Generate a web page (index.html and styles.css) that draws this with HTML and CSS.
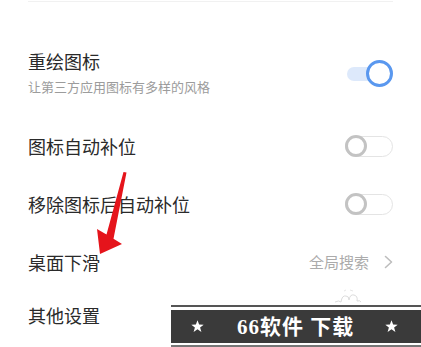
FILE: index.html
```html
<!DOCTYPE html>
<html lang="zh-CN">
<head>
<meta charset="utf-8">
<title>桌面设置</title>
<link rel="stylesheet" href="styles.css">
</head>
<body>
<div class="page">
  <div class="divider"></div>

  <div class="row row-first">
    <div class="text">
      <div class="title">重绘图标</div>
      <div class="sub">让第三方应用图标有多样的风格</div>
    </div>
    <span class="switch on"><span class="track"></span><span class="knob"></span></span>
  </div>

  <div class="row row-std">
    <div class="title">图标自动补位</div>
    <span class="switch off"><span class="track"></span><span class="knob"></span></span>
  </div>

  <div class="row row-std">
    <div class="title">移除图标后自动补位</div>
    <span class="switch off"><span class="track"></span><span class="knob"></span></span>
  </div>

  <div class="row row-tall">
    <div class="title">桌面下滑</div>
    <div class="value">
      <span class="value-text">全局搜索</span>
      <svg class="chevron" width="9" height="14" viewBox="0 0 9 14"><path d="M1.5 1.5 L7.5 7 L1.5 12.5" fill="none" stroke="#bdbdbd" stroke-width="1.6" stroke-linecap="round" stroke-linejoin="round"/></svg>
    </div>
  </div>

  <div class="row row-last">
    <div class="title">其他设置</div>
  </div>
</div>

<svg class="arrow" width="421" height="347" viewBox="0 0 421 347">
  <polygon points="123.5,172 126.5,172.5 113.5,238.8 122,244 100,254 97,229 106.5,234.6" fill="#e5141b"/>
</svg>

<svg class="doodle" width="30" height="18" viewBox="0 0 30 18">
  <path d="M2 15 Q6 13 8 15 M8 15 Q9 8 13 9 Q16 9 16 13 Q17 7 21 8 Q25 9 24 14 Q27 13 28 15" fill="none" stroke="#dcdcdc" stroke-width="1"/>
  <path d="M11 4 L13 3 M17 3 L20 4" fill="none" stroke="#e6e6e6" stroke-width="1"/>
</svg>

<div class="banner">
  <div class="banner-line-top"></div>
  <div class="banner-band">
    <svg class="star" width="13" height="13" viewBox="0 0 12 12"><polygon points="6,0.3 7.5,4.2 11.7,4.3 8.4,6.9 9.6,11 6,8.6 2.4,11 3.6,6.9 0.3,4.3 4.5,4.2" fill="#ffffff"/></svg>
    <span class="banner-text">66软件 下载</span>
    <svg class="star star-right" width="13" height="13" viewBox="0 0 12 12"><polygon points="6,0.3 7.5,4.2 11.7,4.3 8.4,6.9 9.6,11 6,8.6 2.4,11 3.6,6.9 0.3,4.3 4.5,4.2" fill="#ffffff"/></svg>
  </div>
  <div class="banner-line-bottom"></div>
</div>
</body>
</html>
```

FILE: styles.css
```css
html, body {
  margin: 0;
  padding: 0;
  background: #ffffff;
}

body {
  width: 421px;
  height: 347px;
  overflow: hidden;
  position: relative;
  font-family: "Noto Sans CJK SC", "Noto Sans", sans-serif;
}

.page {
  display: flex;
  flex-direction: column;
  padding: 0 28px;
}

.divider {
  margin-top: 1px;
  height: 1px;
  background: #f1f1f1;
}

.row {
  display: flex;
  align-items: center;
  justify-content: space-between;
}

.row-first {
  height: 115px;
  align-items: flex-start;
  padding-top: 47px;
  box-sizing: border-box;
}

.row-std {
  height: 58px;
}

.row-tall {
  height: 58px;
}

.row-last {
  height: 47px;
}

.text {
  display: flex;
  flex-direction: column;
}

.title {
  font-size: 18px;
  line-height: 24px;
  color: #2a2a2a;
}

.sub {
  margin-top: 5px;
  font-size: 13px;
  line-height: 18px;
  color: #9c9c9c;
}

.switch {
  position: relative;
  display: block;
  flex: none;
}

.switch.on {
  width: 46px;
  height: 27px;
  margin-top: 11px;
}

.switch.on .track {
  position: absolute;
  left: 0;
  top: 7px;
  width: 40px;
  height: 14px;
  border-radius: 7px;
  background: #dde9fb;
}

.switch.on .knob {
  position: absolute;
  right: 0;
  top: 0;
  width: 27px;
  height: 27px;
  box-sizing: border-box;
  border-radius: 50%;
  border: 3.5px solid #5a98ef;
  background: #ffffff;
}

.switch.off {
  width: 48px;
  height: 22px;
}

.switch.off .track {
  position: absolute;
  left: 0;
  top: 0.5px;
  width: 48px;
  height: 21px;
  box-sizing: border-box;
  border-radius: 11px;
  border: 1.5px solid #e4e4e4;
  background: #ffffff;
}

.switch.off .knob {
  position: absolute;
  left: 0;
  top: 0;
  width: 22px;
  height: 22px;
  box-sizing: border-box;
  border-radius: 50%;
  border: 3px solid #c3c3c3;
  background: #ffffff;
}

.value {
  display: flex;
  align-items: center;
}

.value-text {
  font-size: 15px;
  line-height: 20px;
  color: #ababab;
}

.chevron {
  display: block;
  margin-left: 15px;
}

.arrow {
  position: absolute;
  left: 0;
  top: 0;
  pointer-events: none;
}

.doodle {
  position: absolute;
  left: 333px;
  top: 287px;
}

.banner {
  position: absolute;
  left: 171px;
  top: 305px;
  right: 0;
  height: 42px;
  display: flex;
  flex-direction: column;
}

.banner-line-top {
  height: 2px;
  background: #555555;
}

.banner-band {
  margin-top: 3px;
  height: 33px;
  background: #3a3a3a;
  display: flex;
  align-items: center;
  padding-left: 20px;
}

.star {
  display: block;
  flex: none;
}

.banner-text {
  margin-left: 33px;
  font-family: "Liberation Serif", "Noto Sans CJK SC", serif;
  font-weight: 700;
  font-size: 21px;
  line-height: 24px;
  letter-spacing: 1px;
  color: #ffffff;
}

.star-right {
  margin-left: 31px;
}

.banner-line-bottom {
  margin-top: 2px;
  height: 2px;
  background: #777777;
}
```
